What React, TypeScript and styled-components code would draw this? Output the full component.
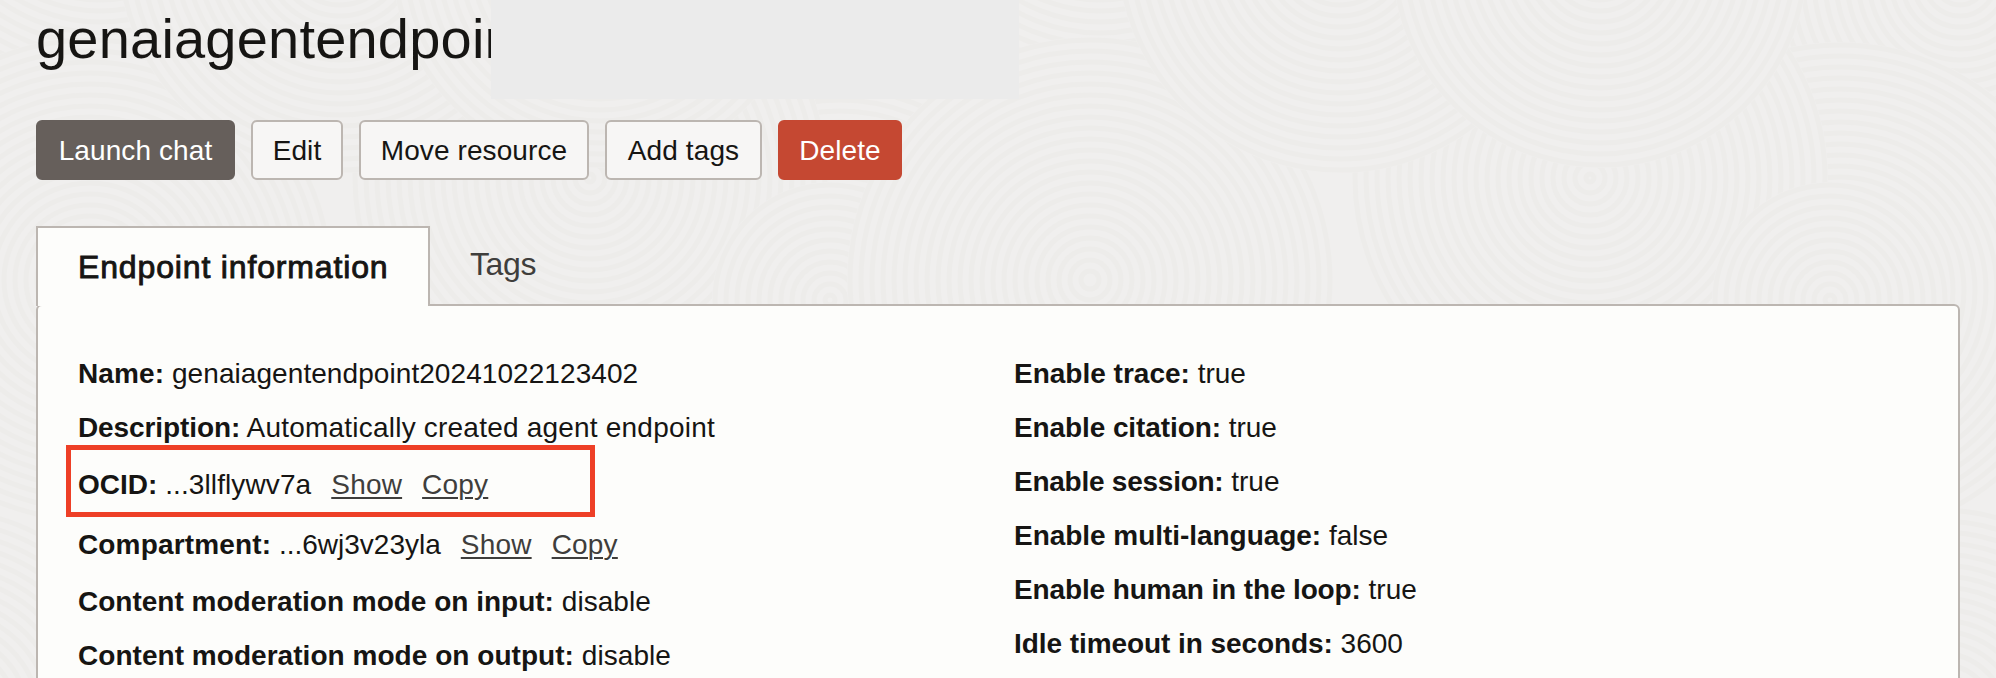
import React from "react";
import styled, { createGlobalStyle, css } from "styled-components";

const GlobalStyle = createGlobalStyle`
  *, *::before, *::after { box-sizing: border-box; }
  html, body { margin: 0; padding: 0; overflow: hidden; }
  body { background: #f0efee; font-family: "Liberation Sans", Arial, sans-serif; color: #161513; }
`;

const Page = styled.main`
  position: relative;
  display: flex;
  flex-direction: column;
  height: 678px;
  padding: 0 36px;
  overflow: hidden;
  isolation: isolate;
`;

const Texture = styled.svg`
  position: absolute;
  inset: 0;
  z-index: -1;
`;

const Header = styled.header`
  display: flex;
  flex: none;
  height: 99px;
`;

const TitleClip = styled.div`
  width: 455px;
  flex: none;
  overflow: hidden;
`;

const Title = styled.h1`
  margin: 0;
  padding-top: 7px;
  font-size: 56px;
  line-height: 64px;
  font-weight: 400;
  letter-spacing: 0.2px;
  white-space: nowrap;
`;

const Redaction = styled.div`
  width: 528px;
  height: 99px;
  background: #ebebeb;
`;

const Toolbar = styled.div`
  display: flex;
  flex: none;
  gap: 16px;
  margin-top: 21px;
`;

type Tone = "primary" | "plain" | "danger";
const tones = {
  primary: css`background: #665f5b; border-color: #665f5b; color: #fff;`,
  plain: css`background: #f7f6f5; border-color: #bcb6b1; color: #161513;`,
  danger: css`background: #c54832; border-color: #c54832; color: #fff;`,
};

const Button = styled.button<{ $tone: Tone; $width: number }>`
  width: ${(p) => p.$width}px;
  height: 60px;
  padding: 2px 0 0;
  border: 2px solid;
  border-radius: 6px;
  font: 400 28px/54px "Liberation Sans", Arial, sans-serif;
  letter-spacing: 0.1px;
  white-space: nowrap;
  ${(p) => tones[p.$tone]}
`;

const Tabs = styled.nav`
  display: flex;
  flex: none;
  margin-top: 46px;
  height: 80px;
  position: relative;
  z-index: 1;
`;

const Tab = styled.div<{ $active?: boolean }>`
  font-size: 32px;
  line-height: 36px;
  white-space: nowrap;
  ${(p) =>
    p.$active
      ? css`
          width: 394px;
          padding: 21px 0 0 40px;
          background: #fdfdfb;
          border: 2px solid #bcb6b1;
          border-bottom: 0;
          letter-spacing: 0.85px;
          -webkit-text-stroke: 0.9px #161513;
        `
      : css`
          padding: 20px 0 0 40px;
          color: #3f3e3c;
          letter-spacing: -0.4px;
        `}
`;

const Panel = styled.section`
  display: grid;
  flex: none;
  grid-template-columns: 936px 1fr;
  height: 420px;
  margin-top: -2px;
  padding: 52px 40px 0;
  background: #fdfdfb;
  border: 2px solid #bcb6b1;
  border-radius: 6px;
`;

const Column = styled.div`
  display: flex;
  flex-direction: column;
`;

const Row = styled.div<{ $h?: number; $spacing?: number }>`
  flex: none;
  height: ${(p) => p.$h ?? 54}px;
  font-size: 28px;
  line-height: 32px;
  letter-spacing: ${(p) => p.$spacing ?? 0}px;
  white-space: nowrap;
`;

const Label = styled.strong<{ $spacing: number }>`
  font-weight: 700;
  letter-spacing: ${(p) => p.$spacing}px;
`;

const Action = styled.a`
  margin-left: 20px;
  color: #3f3e3c;
  letter-spacing: 0.2px;
  text-decoration: underline;
  text-decoration-thickness: 2px;
  text-underline-offset: 3px;
`;

const Highlight = styled.div`
  position: absolute;
  left: 66px;
  top: 445px;
  width: 529px;
  height: 72px;
  border: 5px solid #ee3f26;
  z-index: 2;
`;

const ripples = [
  [-60, 720, 210],
  [100, -140, 250],
  [860, -130, 260],
  [960, -20, 190],
  [90, 280, 240],
  [840, 290, 245],
  [590, 178, 235],
  [340, -50, 220],
  [600, -40, 205],
  [830, 300, 115],
];

function Ripple({ cx, cy, r }: { cx: number; cy: number; r: number }) {
  const rings = [];
  for (let n = r; n > 3; n -= 11) rings.push(n);
  return (
    <g>
      <circle cx={cx} cy={cy} r={r + 3} fill="#f0efee" />
      {rings.map((n) => (
        <circle key={n} cx={cx} cy={cy} r={n} fill="none" stroke="#edecea" strokeWidth="5" />
      ))}
    </g>
  );
}

const left = [
  { label: "Name:", value: "genaiagentendpoint20241022123402", h: 54, ls: 0.1, vs: 0.07 },
  { label: "Description:", value: "Automatically created agent endpoint", h: 57, ls: -0.1, vs: 0.21 },
  { label: "OCID:", value: "...3llflywv7a", h: 60, actions: true, ls: 0, vs: 0.1 },
  { label: "Compartment:", value: "...6wj3v23yla", h: 57, actions: true, ls: 0.15, vs: 0 },
  { label: "Content moderation mode on input:", value: "disable", h: 54, ls: 0, vs: 0.05 },
  { label: "Content moderation mode on output:", value: "disable", h: 54, ls: 0.04, vs: 0.05 },
];

const right = [
  { label: "Enable trace:", value: "true", ls: 0, vs: 0 },
  { label: "Enable citation:", value: "true", ls: -0.1, vs: 0 },
  { label: "Enable session:", value: "true", ls: -0.25, vs: 0 },
  { label: "Enable multi-language:", value: "false", ls: -0.04, vs: 0 },
  { label: "Enable human in the loop:", value: "true", ls: -0.13, vs: 0 },
  { label: "Idle timeout in seconds:", value: "3600", ls: -0.07, vs: 0 },
];

export default function App() {
  return (
    <>
      <GlobalStyle />
      <Page>
        <Texture width="1996" height="678">
          {[-1000, 0, 1000].map((shift) =>
            ripples.map(([cx, cy, r], i) => (
              <Ripple key={`${shift}-${i}`} cx={cx + shift} cy={cy} r={r} />
            )),
          )}
          <Ripple cx={1940} cy={720} r={210} />
        </Texture>
        <Header>
          <TitleClip>
            <Title>genaiagentendpoint</Title>
          </TitleClip>
          <Redaction />
        </Header>
        <Toolbar>
          <Button $tone="primary" $width={199}>Launch chat</Button>
          <Button $tone="plain" $width={92}>Edit</Button>
          <Button $tone="plain" $width={230}>Move resource</Button>
          <Button $tone="plain" $width={157}>Add tags</Button>
          <Button $tone="danger" $width={124}>Delete</Button>
        </Toolbar>
        <Tabs>
          <Tab $active>Endpoint information</Tab>
          <Tab>Tags</Tab>
        </Tabs>
        <Panel>
          <Column>
            {left.map((r) => (
              <Row key={r.label} $h={r.h} $spacing={r.vs}>
                <Label $spacing={r.ls}>{r.label}</Label> {r.value}
                {r.actions && (
                  <>
                    <Action>Show</Action>
                    <Action>Copy</Action>
                  </>
                )}
              </Row>
            ))}
          </Column>
          <Column>
            {right.map((r) => (
              <Row key={r.label} $spacing={r.vs}>
                <Label $spacing={r.ls}>{r.label}</Label> {r.value}
              </Row>
            ))}
          </Column>
        </Panel>
        <Highlight />
      </Page>
    </>
  );
}
